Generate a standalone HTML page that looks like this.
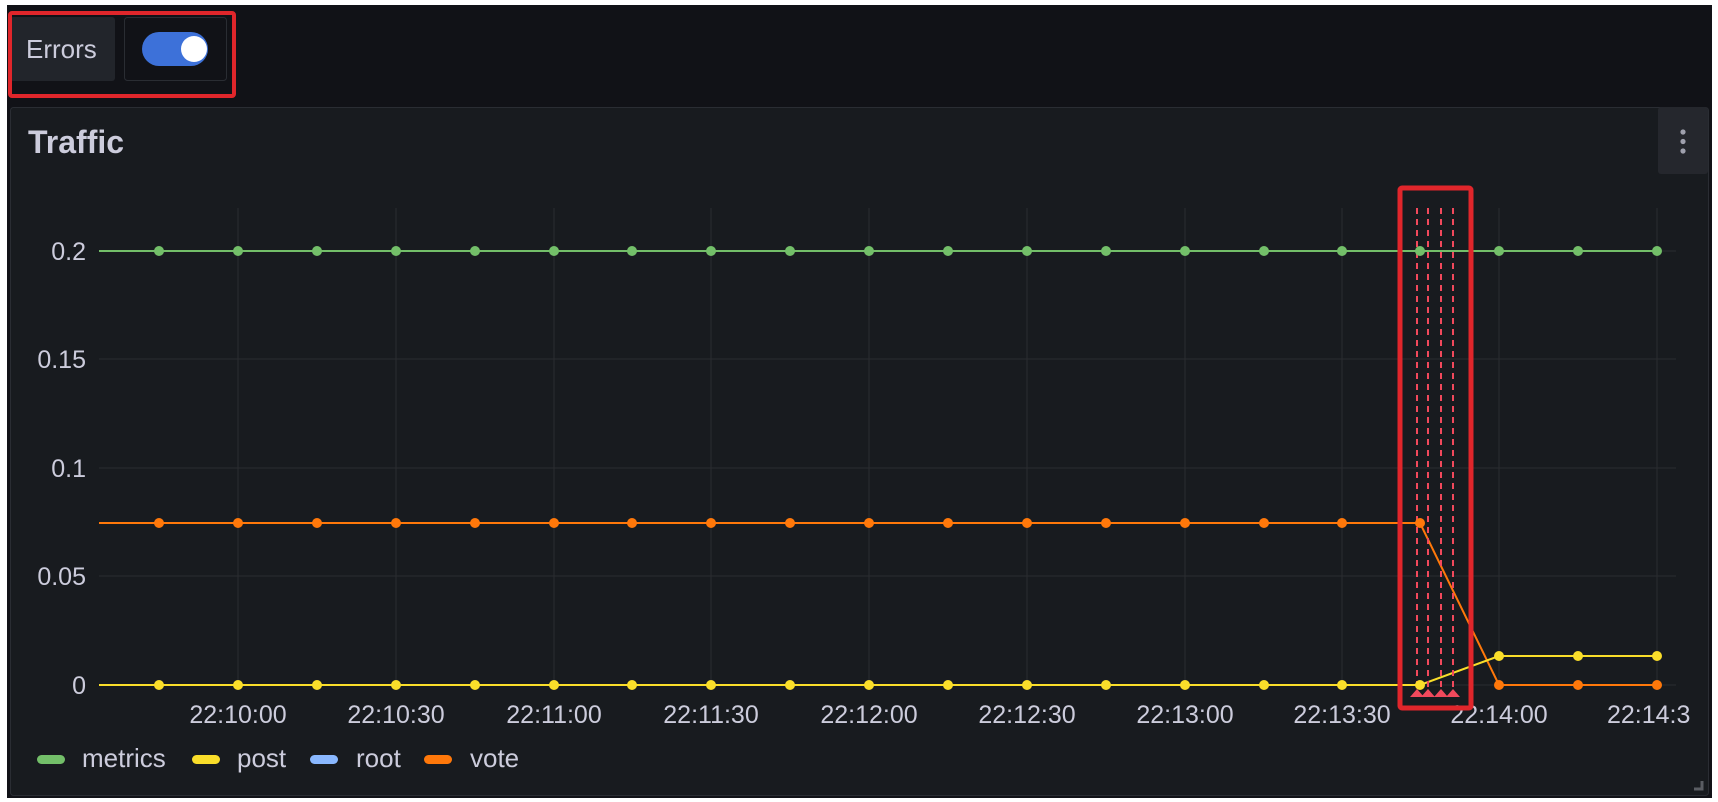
<!DOCTYPE html>
<html><head><meta charset="utf-8">
<style>
html,body{margin:0;padding:0;background:#fff;width:1718px;height:802px;overflow:hidden}
svg{display:block}
text{font-family:"Liberation Sans",sans-serif;fill:#ccccdc}
</style></head>
<body>
<svg width="1718" height="802" viewBox="0 0 1718 802" xmlns="http://www.w3.org/2000/svg">
<rect x="0" y="0" width="1718" height="802" fill="#fff"/>
<rect x="7" y="5" width="1705" height="793" fill="#111217"/>
<!-- errors control -->
<rect x="10" y="17" width="105" height="64" rx="3" fill="#22252b"/>
<text x="26" y="58" font-size="26">Errors</text>
<rect x="124.5" y="17.5" width="102" height="63" rx="3" fill="#111217" stroke="#2a2d33"/>
<rect x="142" y="32" width="66" height="34" rx="17" fill="#3d71d9"/>
<circle cx="194" cy="49" r="13" fill="#fff"/>
<rect x="10" y="13" width="224" height="83" rx="2" fill="none" stroke="#e0262b" stroke-width="4"/>
<!-- panel -->
<rect x="10.5" y="107.5" width="1698" height="688" rx="3" fill="#181b1f" stroke="#2a2d33"/>
<text x="28" y="153" font-size="32" font-weight="500" style="font-weight:600">Traffic</text>
<rect x="1658" y="107" width="50" height="67" rx="3" fill="#25272d"/>
<circle cx="1683" cy="132" r="2.6" fill="#9fa0ad"/>
<circle cx="1683" cy="141.5" r="2.6" fill="#9fa0ad"/>
<circle cx="1683" cy="151" r="2.6" fill="#9fa0ad"/>
<!-- grid -->
<g stroke="#2a2c31" stroke-width="1">
<line x1="99" y1="251" x2="1676" y2="251"/>
<line x1="99" y1="359" x2="1676" y2="359"/>
<line x1="99" y1="468" x2="1676" y2="468"/>
<line x1="99" y1="576" x2="1676" y2="576"/>
<line x1="99" y1="685" x2="1676" y2="685"/>
<line x1="238" y1="208" x2="238" y2="685"/>
<line x1="396" y1="208" x2="396" y2="685"/>
<line x1="554" y1="208" x2="554" y2="685"/>
<line x1="711" y1="208" x2="711" y2="685"/>
<line x1="869" y1="208" x2="869" y2="685"/>
<line x1="1027" y1="208" x2="1027" y2="685"/>
<line x1="1185" y1="208" x2="1185" y2="685"/>
<line x1="1342" y1="208" x2="1342" y2="685"/>
<line x1="1499" y1="208" x2="1499" y2="685"/>
<line x1="1657" y1="208" x2="1657" y2="685"/>
</g>
<g font-size="25" text-anchor="end">
<text x="86" y="260">0.2</text>
<text x="86" y="368">0.15</text>
<text x="86" y="477">0.1</text>
<text x="86" y="585">0.05</text>
<text x="86" y="694">0</text>
</g>
<g font-size="25" text-anchor="middle">
<text x="238" y="723">22:10:00</text>
<text x="396" y="723">22:10:30</text>
<text x="554" y="723">22:11:00</text>
<text x="711" y="723">22:11:30</text>
<text x="869" y="723">22:12:00</text>
<text x="1027" y="723">22:12:30</text>
<text x="1185" y="723">22:13:00</text>
<text x="1342" y="723">22:13:30</text>
<text x="1499" y="723">22:14:00</text>
<text x="1607" y="723" text-anchor="start">22:14:3</text>
</g>
<!-- series -->
<line x1="99" y1="251" x2="1657" y2="251" stroke="#73bf69" stroke-width="2"/>
<polyline points="99,523 1420,523 1499,685 1657,685" fill="none" stroke="#ff780a" stroke-width="2"/>
<polyline points="99,685 1420,685 1499,656 1657,656" fill="none" stroke="#fade2a" stroke-width="2"/>
<!-- annotations -->
<g stroke="#f2495c" stroke-width="2" stroke-dasharray="6,5">
<line x1="1417" y1="208" x2="1417" y2="690"/>
<line x1="1428" y1="208" x2="1428" y2="690"/>
<line x1="1441" y1="208" x2="1441" y2="690"/>
<line x1="1453" y1="208" x2="1453" y2="690"/>
</g>
<g fill="#f2495c">
<polygon points="1410,697 1417,689 1424,697"/>
<polygon points="1421,697 1428,689 1435,697"/>
<polygon points="1434,697 1441,689 1448,697"/>
<polygon points="1446,697 1453,689 1460,697"/>
</g>
<rect x="1400" y="188" width="71" height="520" rx="2" fill="none" stroke="#e0262b" stroke-width="5"/>
<!-- legend -->
<rect x="37" y="755" width="28" height="9" rx="4.5" fill="#73bf69"/>
<text x="82" y="767" font-size="26">metrics</text>
<rect x="192" y="755" width="28" height="9" rx="4.5" fill="#fade2a"/>
<text x="237" y="767" font-size="26">post</text>
<rect x="310" y="755" width="28" height="9" rx="4.5" fill="#8ab8ff"/>
<text x="356" y="767" font-size="26">root</text>
<rect x="424" y="755" width="28" height="9" rx="4.5" fill="#ff780a"/>
<text x="470" y="767" font-size="26">vote</text>
<path d="M1694 789 H1702 V781" fill="none" stroke="#5a5d63" stroke-width="3"/>
<g>
<circle cx="159" cy="251" r="5" fill="#73bf69"/><circle cx="238" cy="251" r="5" fill="#73bf69"/><circle cx="317" cy="251" r="5" fill="#73bf69"/><circle cx="396" cy="251" r="5" fill="#73bf69"/><circle cx="475" cy="251" r="5" fill="#73bf69"/><circle cx="554" cy="251" r="5" fill="#73bf69"/><circle cx="632" cy="251" r="5" fill="#73bf69"/><circle cx="711" cy="251" r="5" fill="#73bf69"/><circle cx="790" cy="251" r="5" fill="#73bf69"/><circle cx="869" cy="251" r="5" fill="#73bf69"/><circle cx="948" cy="251" r="5" fill="#73bf69"/><circle cx="1027" cy="251" r="5" fill="#73bf69"/><circle cx="1106" cy="251" r="5" fill="#73bf69"/><circle cx="1185" cy="251" r="5" fill="#73bf69"/><circle cx="1264" cy="251" r="5" fill="#73bf69"/><circle cx="1342" cy="251" r="5" fill="#73bf69"/><circle cx="1420" cy="251" r="5" fill="#73bf69"/><circle cx="1499" cy="251" r="5" fill="#73bf69"/><circle cx="1578" cy="251" r="5" fill="#73bf69"/><circle cx="1657" cy="251" r="5" fill="#73bf69"/>
<circle cx="159" cy="523" r="5" fill="#ff780a"/><circle cx="238" cy="523" r="5" fill="#ff780a"/><circle cx="317" cy="523" r="5" fill="#ff780a"/><circle cx="396" cy="523" r="5" fill="#ff780a"/><circle cx="475" cy="523" r="5" fill="#ff780a"/><circle cx="554" cy="523" r="5" fill="#ff780a"/><circle cx="632" cy="523" r="5" fill="#ff780a"/><circle cx="711" cy="523" r="5" fill="#ff780a"/><circle cx="790" cy="523" r="5" fill="#ff780a"/><circle cx="869" cy="523" r="5" fill="#ff780a"/><circle cx="948" cy="523" r="5" fill="#ff780a"/><circle cx="1027" cy="523" r="5" fill="#ff780a"/><circle cx="1106" cy="523" r="5" fill="#ff780a"/><circle cx="1185" cy="523" r="5" fill="#ff780a"/><circle cx="1264" cy="523" r="5" fill="#ff780a"/><circle cx="1342" cy="523" r="5" fill="#ff780a"/><circle cx="1420" cy="523" r="5" fill="#ff780a"/><circle cx="1499" cy="685" r="5" fill="#ff780a"/><circle cx="1578" cy="685" r="5" fill="#ff780a"/><circle cx="1657" cy="685" r="5" fill="#ff780a"/>
<circle cx="159" cy="685" r="5" fill="#fade2a"/><circle cx="238" cy="685" r="5" fill="#fade2a"/><circle cx="317" cy="685" r="5" fill="#fade2a"/><circle cx="396" cy="685" r="5" fill="#fade2a"/><circle cx="475" cy="685" r="5" fill="#fade2a"/><circle cx="554" cy="685" r="5" fill="#fade2a"/><circle cx="632" cy="685" r="5" fill="#fade2a"/><circle cx="711" cy="685" r="5" fill="#fade2a"/><circle cx="790" cy="685" r="5" fill="#fade2a"/><circle cx="869" cy="685" r="5" fill="#fade2a"/><circle cx="948" cy="685" r="5" fill="#fade2a"/><circle cx="1027" cy="685" r="5" fill="#fade2a"/><circle cx="1106" cy="685" r="5" fill="#fade2a"/><circle cx="1185" cy="685" r="5" fill="#fade2a"/><circle cx="1264" cy="685" r="5" fill="#fade2a"/><circle cx="1342" cy="685" r="5" fill="#fade2a"/><circle cx="1420" cy="685" r="5" fill="#fade2a"/><circle cx="1499" cy="656" r="5" fill="#fade2a"/><circle cx="1578" cy="656" r="5" fill="#fade2a"/><circle cx="1657" cy="656" r="5" fill="#fade2a"/>
</g>
</svg>
</body></html>
